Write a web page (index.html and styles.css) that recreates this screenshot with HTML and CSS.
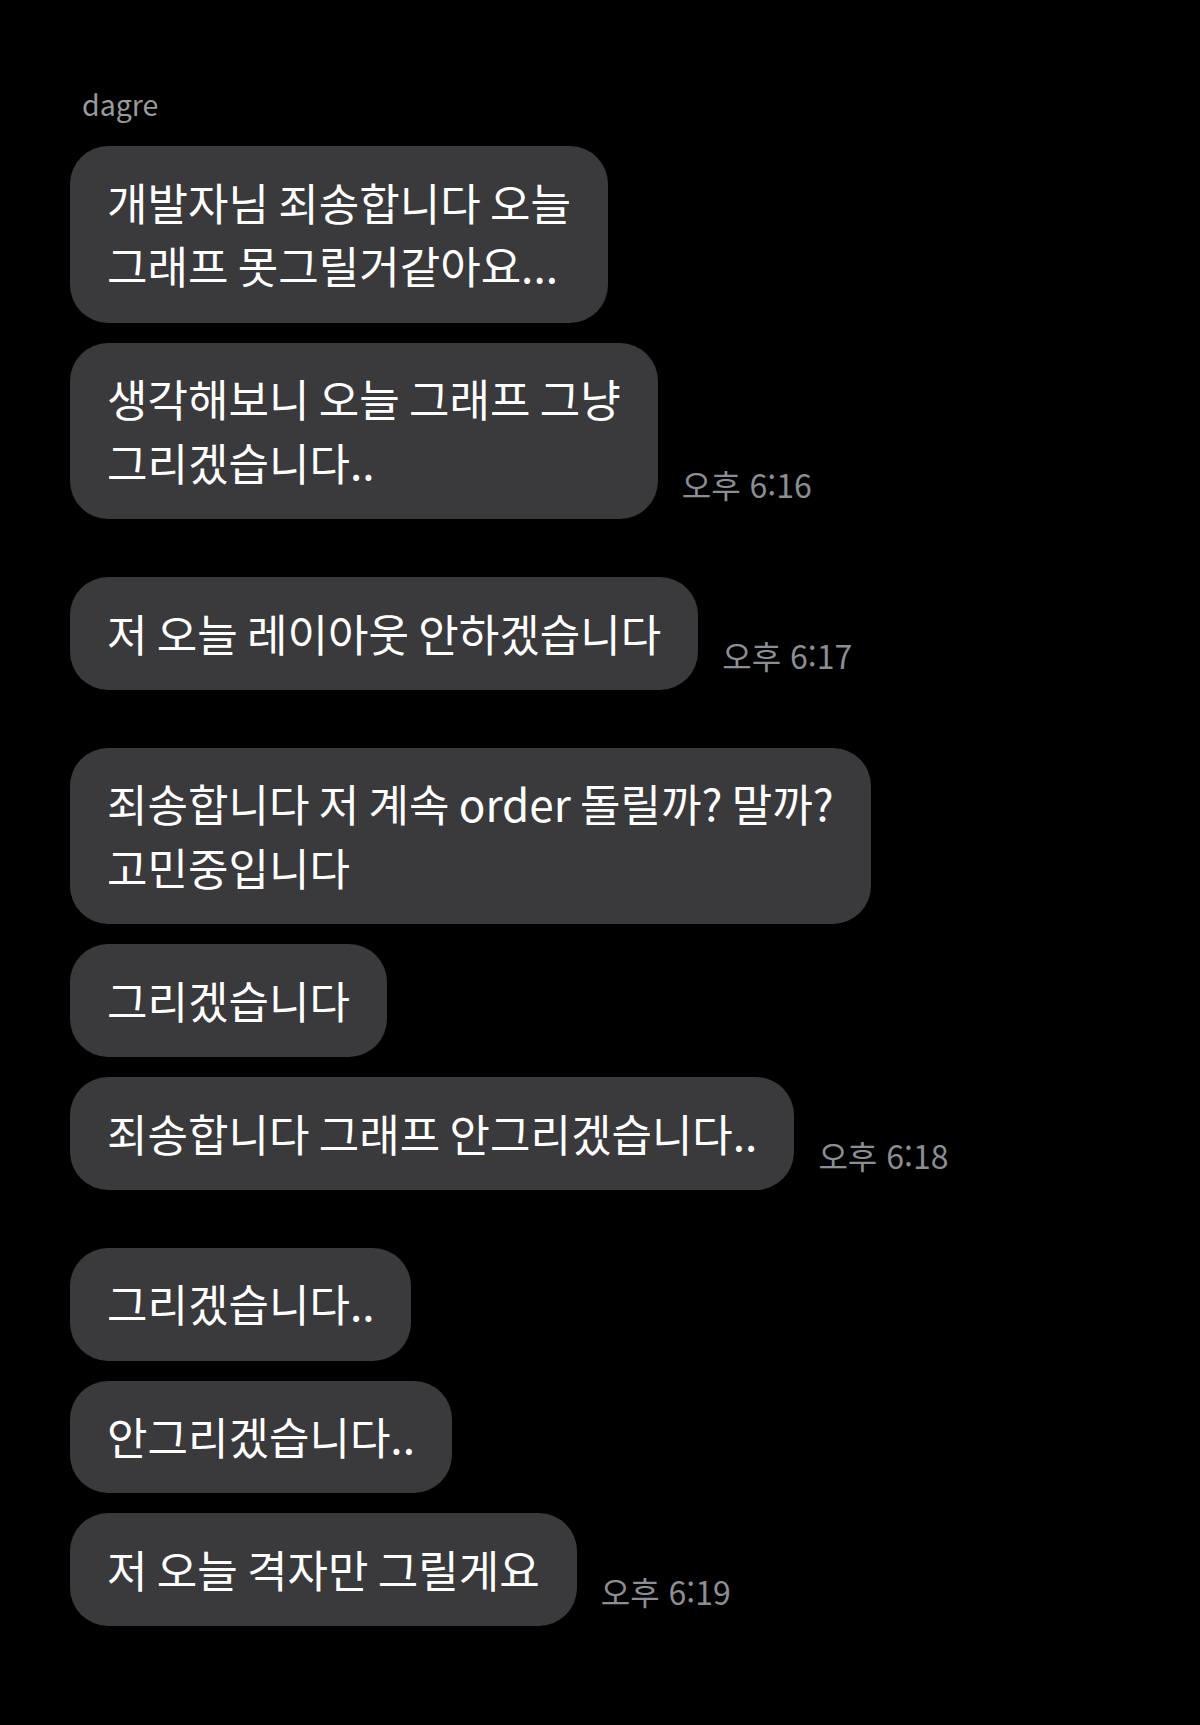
FILE: index.html
```html
<!DOCTYPE html>
<html lang="ko">

<head>
    <meta charset="UTF-8">
    <meta name="viewport" content="width=device-width, initial-scale=1.0">
    <title>dagre</title>
    <link rel="stylesheet" href="styles.css">
</head>

<body>

    <main class="chat">
        <div class="sender">dagre</div>

        <div class="group">
            <div class="row">
                <div class="bubble">개발자님 죄송합니다 오늘<br>그래프 못그릴거같아요...</div>
            </div>
            <div class="row">
                <div class="bubble">생각해보니 오늘 그래프 그냥<br>그리겠습니다..</div>
                <span class="time">오후 6:16</span>
            </div>
        </div>

        <div class="group">
            <div class="row">
                <div class="bubble">저 오늘 레이아웃 안하겠습니다</div>
                <span class="time">오후 6:17</span>
            </div>
        </div>

        <div class="group">
            <div class="row">
                <div class="bubble">죄송합니다 저 계속 order 돌릴까? 말까?<br>고민중입니다</div>
            </div>
            <div class="row">
                <div class="bubble">그리겠습니다</div>
            </div>
            <div class="row">
                <div class="bubble">죄송합니다 그래프 안그리겠습니다..</div>
                <span class="time">오후 6:18</span>
            </div>
        </div>

        <div class="group">
            <div class="row">
                <div class="bubble">그리겠습니다..</div>
            </div>
            <div class="row">
                <div class="bubble">안그리겠습니다..</div>
            </div>
            <div class="row">
                <div class="bubble">저 오늘 격자만 그릴게요</div>
                <span class="time">오후 6:19</span>
            </div>
        </div>
    </main>

</body>

</html>
```

FILE: styles.css
```css
body {
    margin: 0;
    padding: 0;
    background-color: #000;
    color: #fff;
    font-family: "Noto Sans CJK KR", "Noto Sans", sans-serif;
}

.chat {
    display: flex;
    flex-direction: column;
    gap: 58px;
    padding: 90px 0 80px 70px;
}

.sender {
    padding-left: 12px;
    margin-bottom: -30px;
    font-size: 28.5px;
    line-height: 28px;
    color: #9a9a9a;
}

.group {
    display: flex;
    flex-direction: column;
    gap: 20px;
}

.row {
    display: flex;
    align-items: flex-end;
}

.bubble {
    background-color: #3a3a3c;
    border-radius: 38px;
    padding: 24.5px 37px;
    font-size: 44px;
    line-height: 63.75px;
    word-spacing: -3px;
    white-space: nowrap;
}

.time {
    margin-left: 24px;
    padding-bottom: 19px;
    font-size: 32px;
    line-height: 32px;
    color: #8b8e94;
    white-space: nowrap;
}
```
